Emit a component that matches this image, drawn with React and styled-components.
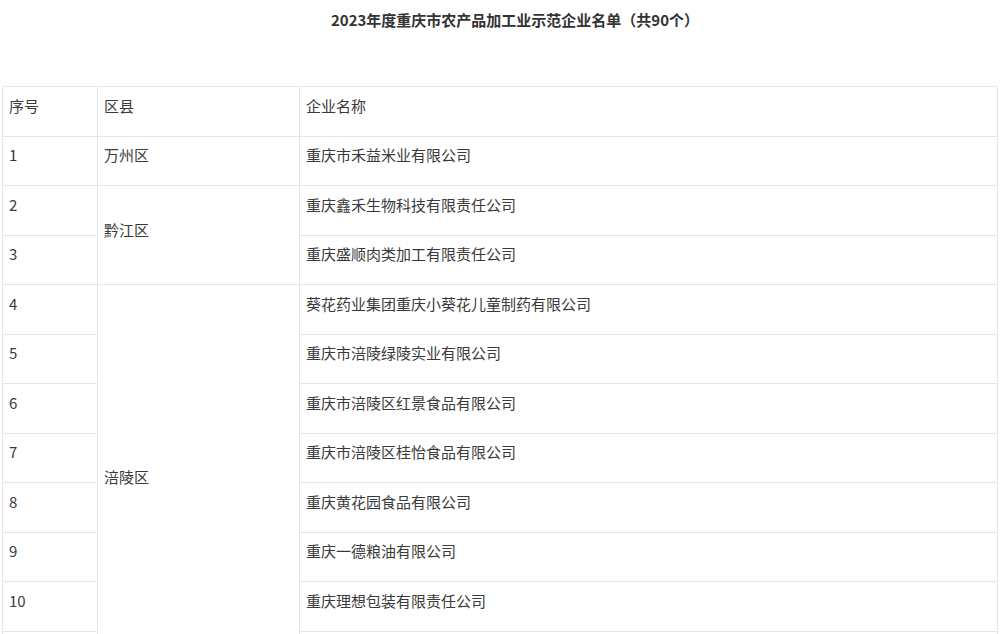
import React from "react";
import styled, { createGlobalStyle } from "styled-components";

const GlobalStyle = createGlobalStyle`
  body {
    margin: 0;
    background: #fff;
    font-family: "Noto Sans CJK SC", "Noto Sans", sans-serif;
    color: #333;
  }
`;

const Page = styled.div`
  padding: 0 2px;
`;

const Title = styled.h2`
  margin: 0;
  padding: 9px 0 0 30px;
  height: 86px;
  box-sizing: border-box;
  text-align: center;
  font-size: 15px;
  font-weight: 700;
  line-height: 22px;
  color: #333;
`;

const Table = styled.table`
  width: 996px;
  border-collapse: collapse;
  table-layout: fixed;
  font-size: 15px;
  color: #3a3a3a;
`;

const Row = styled.tr`
  height: 49.5px;
`;

const Cell = styled.td`
  border: 1px solid #e6e6e6;
  padding: 0 6px 11px;
  vertical-align: middle;
  line-height: 20px;
  text-align: left;
  font-weight: normal;
`;

const rows = [
  ["1", "万州区", 1, "重庆市禾益米业有限公司"],
  ["2", "黔江区", 2, "重庆鑫禾生物科技有限责任公司"],
  ["3", null, 0, "重庆盛顺肉类加工有限责任公司"],
  ["4", "涪陵区", 8, "葵花药业集团重庆小葵花儿童制药有限公司"],
  ["5", null, 0, "重庆市涪陵绿陵实业有限公司"],
  ["6", null, 0, "重庆市涪陵区红景食品有限公司"],
  ["7", null, 0, "重庆市涪陵区桂怡食品有限公司"],
  ["8", null, 0, "重庆黄花园食品有限公司"],
  ["9", null, 0, "重庆一德粮油有限公司"],
  ["10", null, 0, "重庆理想包装有限责任公司"],
  ["11", null, 0, "重庆市涪陵区洪丽食品有限责任公司"],
];

export default function App() {
  return (
    <Page>
      <GlobalStyle />
      <Title>2023年度重庆市农产品加工业示范企业名单（共90个）</Title>
      <Table>
        <colgroup>
          <col style={{ width: 95 }} />
          <col style={{ width: 202 }} />
          <col />
        </colgroup>
        <tbody>
          <Row>
            <Cell>序号</Cell>
            <Cell>区县</Cell>
            <Cell>企业名称</Cell>
          </Row>
          {rows.map(([no, area, span, name]) => (
            <Row key={no}>
              <Cell>{no}</Cell>
              {area && <Cell rowSpan={span}>{area}</Cell>}
              <Cell>{name}</Cell>
            </Row>
          ))}
        </tbody>
      </Table>
    </Page>
  );
}
